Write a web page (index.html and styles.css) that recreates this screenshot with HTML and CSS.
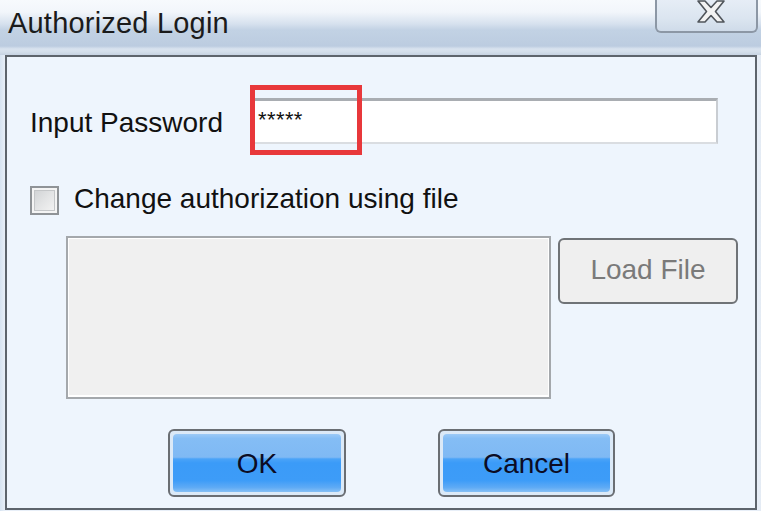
FILE: index.html
```html
<!DOCTYPE html>
<html>
<head>
<meta charset="utf-8">
<link rel="stylesheet" href="styles.css">
</head>
<body>
<div class="window">
  <div class="titlebar">
    <div class="title">Authorized Login</div>
    <div class="close">
      <svg class="close-x" width="28" height="23" viewBox="0 0 28 23">
        <polygon points="1,1 8,1 14,7.5 20,1 27,1 18.5,11.5 27,22 20,22 14,15.5 8,22 1,22 9.5,11.5" fill="#f3f3f3" stroke="#50555b" stroke-width="1.6" stroke-linejoin="round"/>
      </svg>
    </div>
  </div>
  <div class="panel">
    <div class="row-pass">
      <div class="label">Input Password</div>
      <div class="field-wrap">
        <div class="field">*****</div>
        <div class="highlight"></div>
      </div>
    </div>
    <div class="row-check">
      <div class="checkbox"><div class="checkbox-inner"></div></div>
      <div class="check-label">Change authorization using file</div>
    </div>
    <div class="row-file">
      <div class="filebox"></div>
      <div class="load-btn">Load File</div>
    </div>
    <div class="row-actions">
      <div class="btn btn-ok"><span class="btn-face">OK</span></div>
      <div class="btn btn-cancel"><span class="btn-face">Cancel</span></div>
    </div>
  </div>
</div>
</body>
</html>
```

FILE: styles.css
```css
* { box-sizing: border-box; }
html, body { margin: 0; padding: 0; }
body {
  width: 761px;
  height: 511px;
  overflow: hidden;
  font-family: "Liberation Sans", Arial, sans-serif;
  background: #e9f0f8;
}
.window {
  display: flex;
  flex-direction: column;
  height: 511px;
  background: linear-gradient(90deg, #d6e3f1 0px, #e8eff8 5px, #e8eff8 756px, #e4ebf4 761px);
}
.titlebar {
  height: 55px;
  display: flex;
  justify-content: space-between;
  align-items: flex-start;
  background: linear-gradient(180deg, #f7fafd 0px, #f2f6fb 12px, #d6e1ee 24px, #c2d2e4 30px, #bccce0 46px, #d9e3ef 49px, #d3deea 52px, #c6d3e2 55px);
}
.title {
  font-size: 29px;
  line-height: 36px;
  color: #1b1b1b;
  margin: 5px 0 0 8px;
  letter-spacing: 0.2px;
}
.close {
  width: 103px;
  height: 33px;
  margin-right: 3px;
  border: 2px solid #8c97a5;
  border-top: none;
  border-radius: 0 0 6px 6px;
  background: linear-gradient(180deg, #e6edf6 0%, #dbe5f0 60%, #cfdbe9 100%);
  display: flex;
  justify-content: flex-start;
  padding-left: 40px;
  padding-top: 0;
}
.close-x { display: block; }
.panel {
  flex: 1;
  margin: 0 4px 1px 5px;
  border: 2px solid #5d646c;
  background: #eef5fd;
  display: flex;
  flex-direction: column;
}
.row-pass {
  display: flex;
  align-items: flex-start;
  margin-top: 41px;
  padding-left: 23px;
  height: 46px;
}
.label {
  width: 220px;
  font-size: 28px;
  line-height: 32px;
  margin-top: 9px;
  color: #111;
}
.field-wrap { position: relative; }
.field {
  width: 468px;
  height: 46px;
  background: #fff;
  border-top: 3px solid #a9adb2;
  border-left: 2px solid #c3c7cc;
  border-right: 2px solid #c9cdd2;
  border-bottom: 2px solid #dadde1;
  font-size: 22px;
  line-height: 22px;
  padding: 8px 0 0 6px;
  letter-spacing: 0.4px;
  color: #111;
}
.highlight {
  position: absolute;
  left: 0;
  top: -13px;
  width: 112px;
  height: 70px;
  border: 5px solid #e8383b;
}
.row-check {
  display: flex;
  align-items: flex-start;
  margin-top: 42px;
  padding-left: 23px;
  height: 29px;
}
.checkbox {
  width: 29px;
  height: 29px;
  border: 2px solid #8f9397;
  background: #f4f4f4;
  padding: 2px;
}
.checkbox-inner {
  width: 100%;
  height: 100%;
  background: linear-gradient(135deg, #d2d4d6 0%, #e3e4e5 50%, #f2f2f2 100%);
  border: 1px solid #c4c6c8;
}
.check-label {
  margin-left: 15px;
  margin-top: -3px;
  font-size: 28px;
  line-height: 32px;
  color: #111;
}
.row-file {
  display: flex;
  align-items: flex-start;
  margin-top: 21px;
  padding-left: 59px;
}
.filebox {
  width: 485px;
  height: 163px;
  background: #f0f0f0;
  border: 2px solid #a4a8ac;
  box-shadow: inset -1px -2px 0 #ffffff, inset 1px 1px 0 #ffffff;
}
.load-btn {
  width: 180px;
  height: 66px;
  margin-left: 7px;
  margin-top: 2px;
  border: 2px solid #6f7377;
  border-radius: 6px;
  background: #efefef;
  color: #7a7a7a;
  font-size: 28px;
  display: flex;
  align-items: center;
  justify-content: center;
  padding-bottom: 2px;
}
.row-actions {
  display: flex;
  margin-top: 30px;
  padding-left: 161px;
}
.btn {
  height: 68px;
  border: 2px solid #6a6e73;
  border-radius: 6px;
  background: #dbe9f7;
  padding: 3px;
}
.btn-ok { width: 178px; }
.btn-cancel { width: 177px; margin-left: 92px; }
.btn-face {
  display: flex;
  height: 100%;
  border-radius: 4px;
  align-items: center;
  justify-content: center;
  font-size: 28px;
  color: #0c0c24;
  background: linear-gradient(180deg, #9ccaf7 0%, #84bdf5 8%, #7fb9f4 40%, #4aa3f8 43%, #3b9bf8 50%, #3d9cf8 80%, #5eaaf5 92%, #86c0f5 100%);
  padding-top: 1px;
}
```
